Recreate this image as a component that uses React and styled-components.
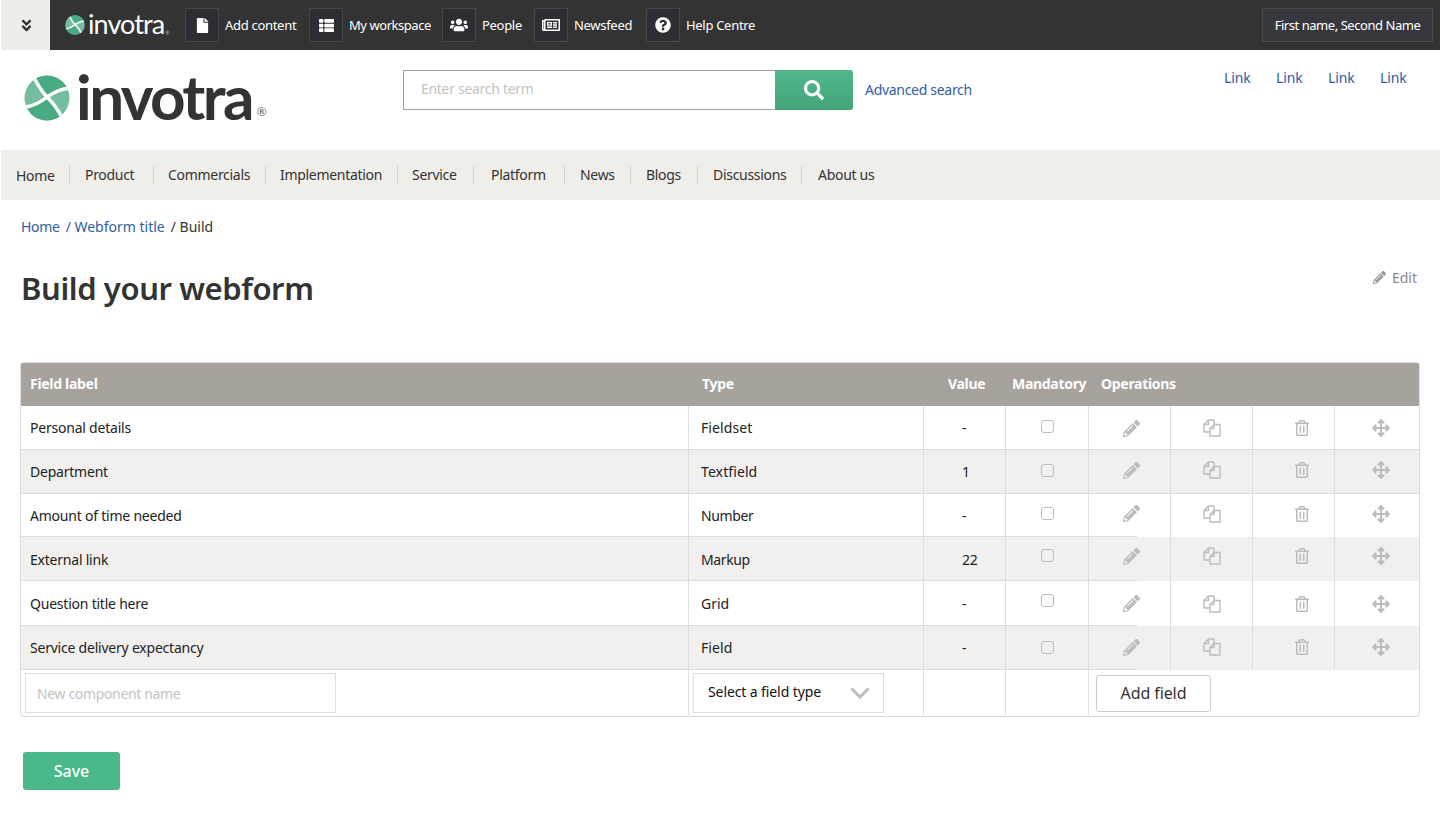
import React, { useId } from 'react';
import styled, { createGlobalStyle } from 'styled-components';
import { FaAngleDoubleDown, FaFile, FaThList, FaUsers, FaRegNewspaper, FaQuestionCircle, FaSearch, FaPencilAlt, FaRegTrashAlt, FaArrowsAlt } from 'react-icons/fa';

const UI = '"Noto Sans", "Open Sans", sans-serif';
const COLS = '668px 235px 82px 83px 82px 82px 82px 84px';

const Global = createGlobalStyle`
  html, body { margin: 0; padding: 0; background: #fff; overflow: hidden; }
  body { font-family: ${UI}; font-size: 14px; color: #333; }
  * { box-sizing: border-box; }
  input::placeholder { color: #c4c2c0; opacity: 1; }
`;

const Page = styled.div`width: 1440px; height: 823px; overflow: hidden;`;

const TopBar = styled.div`display: flex; align-items: center; height: 50px; background: #333; margin-left: 1px; padding-right: 7px;`;
const Toggle = styled.div`width: 49px; height: 50px; padding-left: 2px; background: #eeede8; color: #333; display: flex; align-items: center; justify-content: center; font-size: 15px; margin-right: 15px;`;
const SmallLogo = styled.div`display: flex; align-items: center; width: 120px; gap: 3px; color: #fff;`;
const SmallWord = styled.span`font-family: "Lato", sans-serif; font-weight: 400; font-size: 27px; line-height: 1; letter-spacing: -0.9px; margin-top: -3px; display: flex; align-items: flex-end;`;
const SmallReg = styled.span`font-size: 5px; line-height: 8px; letter-spacing: 0; color: #bbb; margin-left: 1px;`;
const TopItem = styled.div`display: flex; align-items: center; gap: 6px; width: ${p => p.$w}px; color: #fff; font-size: 13px; letter-spacing: ${p => p.$track}px; white-space: nowrap;`;
const IconBox = styled.span`flex: none; width: 34px; height: 34px; display: flex; align-items: center; justify-content: center; background: #2d2e33; border: 1px solid #47474a; color: #fff; font-size: ${p => p.$size}px;`;
const UserBox = styled.div`margin-left: auto; height: 34px; width: 171px; display: flex; align-items: center; justify-content: center; background: #37383d; border: 1px solid #4a4a4a; color: #fff; font-size: 13px; letter-spacing: -0.45px; white-space: nowrap;`;

const Masthead = styled.div`height: 100px; display: flex; position: relative;`;
const Brand = styled.div`width: 403px; padding: 25px 0 0 24px; display: flex; align-items: flex-start; gap: 6px; color: #333;`;
const BrandWord = styled.span`font-family: "Lato", sans-serif; font-weight: 700; font-size: 62px; line-height: 42px; letter-spacing: -2.6px; display: flex; align-items: flex-end;`;
const Reg = styled.span`font-size: 12px; line-height: 12px; letter-spacing: 0; font-weight: 400; margin: 0 0 -1px 5px; color: #555;`;
const SearchWrap = styled.div`display: flex; align-items: center; height: 40px; margin-top: 20px;`;
const SearchInput = styled.input`width: 372px; height: 40px; border: 1px solid #a3a3a3; border-right: 0; padding: 0 17px 3px; font: 14px ${UI}; outline: none; letter-spacing: -0.3px;`;
const SearchButton = styled.button`width: 78px; height: 40px; border: 0; padding: 0; border-radius: 0 3px 3px 0; background: linear-gradient(#50b78a, #43a47a); color: #fff; font-size: 20px; display: flex; align-items: center; justify-content: center;`;
const Advanced = styled.a`margin: 0 0 2px 12px; color: #2f5ea3; font-size: 14px; letter-spacing: -0.3px;`;
const LinkRow = styled.div`margin-left: auto; display: flex; gap: 26px; padding: 18px 34px 0 0; color: #2f5ea3; font-size: 14px; height: 40px;`;
const TextLink = styled.a`color: #2f5ea3; width: 26px; letter-spacing: -0.15px;`;

const Nav = styled.nav`height: 50px; margin-left: 1px; background: #efeee9; display: flex; align-items: center;`;
const NavItem = styled.a`height: 19px; line-height: ${p => p.$first ? 19 : 17}px; padding: 0 0 0 ${p => p.$pad}px; border-right: 1px solid ${p => p.$last ? 'transparent' : '#d5d4cf'}; color: #333; font-size: 14px; letter-spacing: -0.3px; white-space: nowrap; width: ${p => p.$w}px;`;

const Crumbs = styled.div`padding: 17px 0 0 21px; height: 44px; line-height: 19px; font-size: 14px; display: flex; gap: 6px;`;
const Crumb = styled.a`color: #2f5ea3; letter-spacing: ${p => p.$track}px;`;
const CrumbCurrent = styled.span`letter-spacing: 0;`;
const TitleRow = styled.div`display: flex; justify-content: space-between; padding: 0 23px 0 21px; height: 118px;`;
const Title = styled.h1`margin: 19px 0 0; font-size: 31px; line-height: 50px; font-weight: 600; letter-spacing: -0.4px; color: #333;`;
const EditLink = styled.a`display: flex; align-items: center; gap: 6px; height: 20px; margin-top: 23px; font-size: 14px; color: #8a8a8a;`;

const Table = styled.div`margin-left: 20px; width: 1400px; height: 355px; border: 1px solid #ddd; border-radius: 3px; overflow: hidden;`;
const HeadRow = styled.div`display: grid; grid-template-columns: ${COLS}; height: 43px; padding-bottom: 2px; align-items: center; background: #a7a29b; color: #fff; font-weight: 700; font-size: 14px; letter-spacing: -0.3px; white-space: nowrap;`;
const HeadCell = styled.div`padding-left: ${p => p.$inset}px;`;
const Row = styled.div`
  display: grid; grid-template-columns: ${COLS}; height: ${p => p.$h}px;
  background: ${p => `linear-gradient(#ddd, #ddd) 0 100% / ${p.$rule}px 1px no-repeat`}, ${p => p.$alt ? '#f1f0ee' : '#fff'};
`;
const Cell = styled.div`display: flex; align-items: center; padding-left: ${p => p.$inset}px; padding-bottom: ${p => p.$up ? 2 : 0}px; border-right: ${p => p.$plain ? 0 : '1px solid #ddd'}; font-size: 14px; color: #222; letter-spacing: ${p => p.$track ?? -0.22}px; white-space: nowrap; min-width: 0;`;
const Box = styled.span`display: block; width: 13px; height: 13px; border: 1px solid #bcbcbc; border-radius: 3px; background: ${p => p.$alt ? '#f1f0ee' : '#fff'}; transform: translateY(-${p => p.$lift}px);`;
const OpIcon = styled.span`display: flex; color: #bcbcbc; font-size: ${p => p.$size}px; transform: translateY(-${p => p.$lift}px);`;
const LastRow = styled.div`display: grid; grid-template-columns: ${COLS}; height: 46px;`;
const NameInput = styled.input`width: 311px; height: 40px; margin: 3px 0 0 4px; border: 1px solid #dedede; padding: 0 11px; font: 14px ${UI}; letter-spacing: -0.35px; outline: none;`;
const LastCell = styled.div`border-right: 1px solid #ddd; height: 45px;`;
const SelectBox = styled.button`width: 191px; height: 40px; margin: 3px 0 0 4px; border: 1px solid #dedede; background: #fff; padding: 0 13px 3px 14px; display: flex; align-items: center; justify-content: space-between; font: 14px ${UI}; letter-spacing: -0.1px; color: #111;`;
const SelectChevron = styled.span`display: flex; margin-top: 3px;`;
const AddCell = styled.div`grid-column: span 4; padding: 5px 0 0 7px;`;
const AddButton = styled.button`width: 115px; height: 37px; padding: 0 0 2px; border: 1px solid #ccc; border-radius: 3px; background: #fff; font: 16px ${UI}; color: #333; letter-spacing: -0.1px;`;
const SaveButton = styled.button`display: block; margin: 35px 0 0 23px; width: 97px; height: 38px; border: 0; border-radius: 3px; background: #4bb88a; color: #fff; font: 500 16px ${UI};`;

function Swirl({ size }) {
  const id = useId();
  return (
    <svg width={size} height={size} viewBox="0 0 46 46" aria-hidden="true">
      <defs><clipPath id={id}><circle cx="23" cy="23" r="22.5" /></clipPath></defs>
      <g clipPath={`url(#${id})`}>
        <rect width="46" height="46" fill="#74bd9f" />
        <path d="M10 2C14 10 17 16 23 22C30 17 37 14 45 13L46 0L10 0Z" fill="#49ab82" />
        <path d="M1 32C10 31 16 28 23 22C29 28 34 34 37 40L37 46L0 46Z" fill="#49ab82" />
        <path d="M9 1C14 10 17 16 23 22C29 28 34 34 38 43M0 32.500C10 31 16 28 23 22C30 17 37 14 46 13" fill="none" stroke="#fff" strokeWidth="3.4" />
      </g>
    </svg>
  );
}

function CopyIcon() {
  return (
    <svg width="18" height="18" viewBox="0 0 18 18" fill="none" stroke="#bcbcbc" strokeWidth="1.4" strokeLinejoin="round" aria-hidden="true">
      <path d="M5.500 1H11V5.500M5.500 1L1 5.500V13H7M5.500 1V5.500H1" />
      <path d="M11 5.500H17V17H7V9.500ZM11 5.500V9.500H7" />
    </svg>
  );
}

function Chevron() {
  return (
    <svg width="20" height="12" viewBox="0 0 20 12" fill="none" stroke="#bcbcbc" strokeWidth="3" aria-hidden="true">
      <path d="M1.500 1.500L10 10L18.500 1.500" />
    </svg>
  );
}

const TOP = [
  [FaFile, 'Add content', 124, 15, -0.3],
  [FaThList, 'My workspace', 133, 15, -0.45],
  [FaUsers, 'People', 92, 18, -0.3],
  [FaRegNewspaper, 'Newsfeed', 112, 18, -0.3],
  [FaQuestionCircle, 'Help Centre', 120, 16, -0.3],
];
const NAV = [['Home', 69, 15], ['Product', 84, 15], ['Commercials', 112, 14], ['Implementation', 132, 14], ['Service', 76, 14], ['Platform', 91, 17], ['News', 66, 15], ['Blogs', 67, 15], ['Discussions', 104, 15], ['About us', 90, 16]];
const ROWS = [
  { label: 'Personal details', type: 'Fieldset', track: 0.1, value: '-', h: 44, lift: 0, box: 2, rule: 1398, up: true },
  { label: 'Department', type: 'Textfield', track: 0.1, value: '1', h: 44, lift: 2, box: 2, alt: true, rule: 1398, up: true },
  { label: 'Amount of time needed', type: 'Number', track: -0.4, value: '-', h: 43, lift: 2, box: 2, rule: 1116 },
  { label: 'External link', type: 'Markup', track: -0.4, value: '22', h: 44, lift: 3, box: 4, alt: true, rule: 1116 },
  { label: 'Question title here', type: 'Grid', track: 0, value: '-', h: 45, lift: 0, box: 3, rule: 1116 },
  { label: 'Service delivery expectancy', type: 'Field', track: 0.1, value: '-', h: 44, lift: 1, box: 1, alt: true, rule: 1116, up: true },
];

export default function App() {
  return (
    <Page>
      <Global />
      <TopBar>
        <Toggle><FaAngleDoubleDown /></Toggle>
        <SmallLogo><Swirl size={20} /><SmallWord>invotra<SmallReg>®</SmallReg></SmallWord></SmallLogo>
        {TOP.map(([Icon, label, w, size, track]) => (
          <TopItem key={label} $w={w} $track={track}><IconBox $size={size}><Icon /></IconBox>{label}</TopItem>
        ))}
        <UserBox>First name, Second Name</UserBox>
      </TopBar>
      <Masthead>
        <Brand>
          <Swirl size={46} />
          <BrandWord>invotra<Reg>®</Reg></BrandWord>
        </Brand>
        <SearchWrap>
          <SearchInput placeholder="Enter search term" />
          <SearchButton aria-label="Search"><FaSearch /></SearchButton>
          <Advanced>Advanced search</Advanced>
        </SearchWrap>
        <LinkRow>{[0, 1, 2, 3].map(i => <TextLink key={i}>Link</TextLink>)}</LinkRow>
      </Masthead>
      <Nav>
        {NAV.map(([t, w, pad], i) => <NavItem key={t} $w={w} $pad={pad} $first={i === 0} $last={i === NAV.length - 1}>{t}</NavItem>)}
      </Nav>
      <Crumbs>
        <Crumb $track={-0.3}>Home</Crumb><Crumb $track={0}>/ Webform title</Crumb><CrumbCurrent>/ Build</CrumbCurrent>
      </Crumbs>
      <TitleRow>
        <Title>Build your webform</Title>
        <EditLink><FaPencilAlt size={13} color="#999" />Edit</EditLink>
      </TitleRow>
      <Table>
        <HeadRow>
          <HeadCell $inset={9}>Field label</HeadCell>
          <HeadCell $inset={13}>Type</HeadCell>
          <HeadCell $inset={24}>Value</HeadCell>
          <HeadCell $inset={6}>Mandatory</HeadCell>
          <HeadCell $inset={12}>Operations</HeadCell>
        </HeadRow>
        {ROWS.map(r => (
          <Row key={r.label} $h={r.h} $alt={r.alt} $rule={r.rule}>
            <Cell $inset={9} $up={r.up}>{r.label}</Cell>
            <Cell $inset={12} $up={r.up} $track={r.track}>{r.type}</Cell>
            <Cell $inset={38} $up={r.up}>{r.value}</Cell>
            <Cell $inset={35}><Box $lift={r.box} $alt={r.alt} /></Cell>
            <Cell $inset={34}><OpIcon $size={17} $lift={r.lift}><FaPencilAlt /></OpIcon></Cell>
            <Cell $inset={32}><OpIcon $size={18} $lift={r.lift}><CopyIcon /></OpIcon></Cell>
            <Cell $inset={41}><OpIcon $size={16} $lift={r.lift}><FaRegTrashAlt /></OpIcon></Cell>
            <Cell $inset={37} $plain><OpIcon $size={18} $lift={r.lift}><FaArrowsAlt /></OpIcon></Cell>
          </Row>
        ))}
        <LastRow>
          <LastCell><NameInput placeholder="New component name" /></LastCell>
          <LastCell><SelectBox>Select a field type<SelectChevron><Chevron /></SelectChevron></SelectBox></LastCell>
          <LastCell />
          <LastCell />
          <AddCell><AddButton>Add field</AddButton></AddCell>
        </LastRow>
      </Table>
      <SaveButton>Save</SaveButton>
    </Page>
  );
}
